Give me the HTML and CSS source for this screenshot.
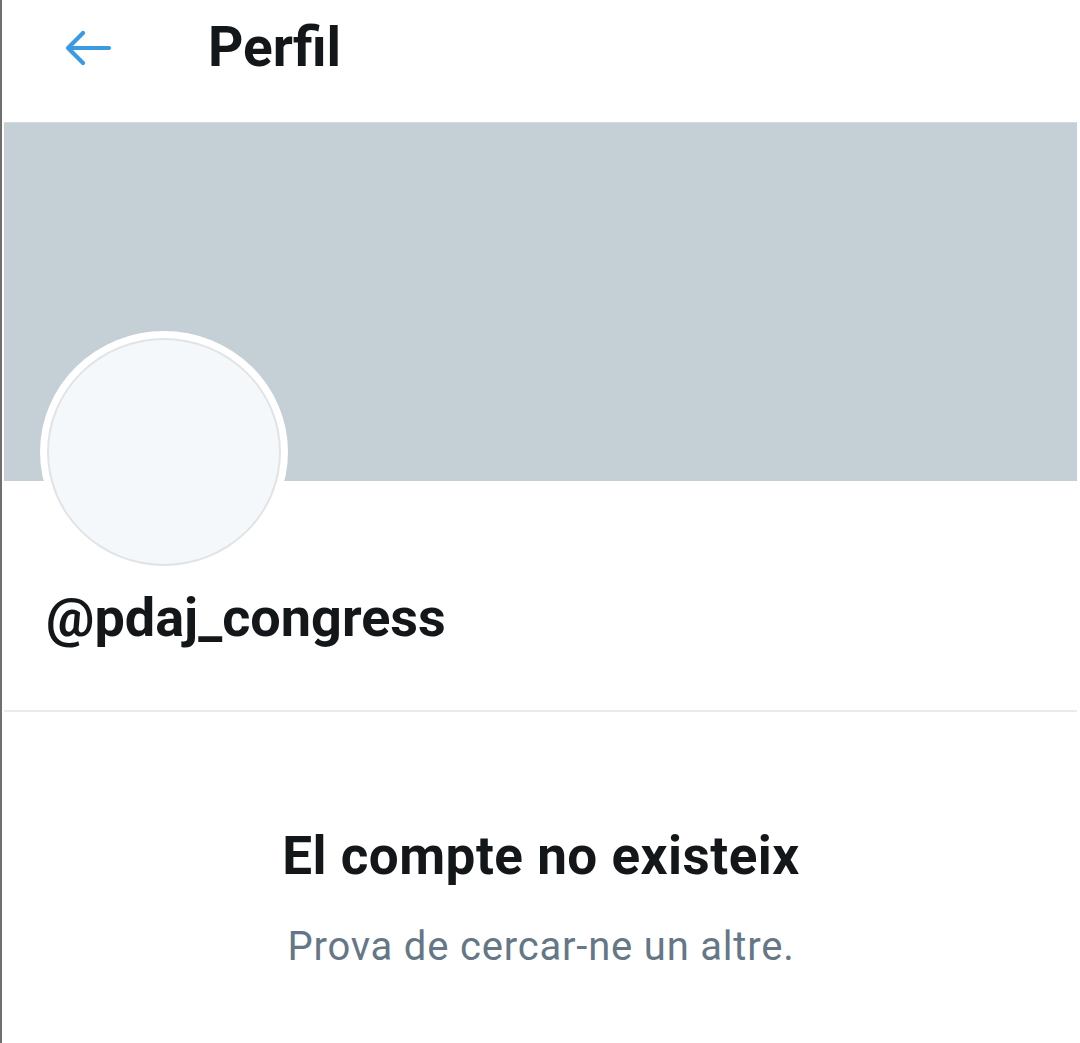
FILE: index.html
```html
<!DOCTYPE html>
<html lang="ca">
<head>
<meta charset="utf-8">
<title>Perfil</title>
<link rel="stylesheet" href="styles.css">
</head>
<body>
<div class="screen">
  <header class="topbar">
    <span class="back" aria-label="Enrere">
      <svg width="48" height="40" viewBox="0 0 48 40" fill="none" stroke="#3a9be0" stroke-width="4.2" stroke-linecap="round" stroke-linejoin="round">
        <path d="M45 18H4M19 3L4 18l15 15"/>
      </svg>
    </span>
    <h1 class="title">Perfil</h1>
  </header>
  <div class="banner"></div>
  <div class="avatar"><div class="avatar-inner"></div></div>
  <div class="handle">@pdaj_congress</div>
  <div class="divider"></div>
  <section class="empty">
    <h2 class="empty-title">El compte no existeix</h2>
    <p class="empty-sub">Prova de cercar-ne un altre.</p>
  </section>
</div>
</body>
</html>
```
FILE: styles.css
```css
* { box-sizing: border-box; }
html, body { margin: 0; padding: 0; background: #fff; }
body {
  font-family: Roboto, "Liberation Sans", Arial, sans-serif;
  color: #14171a;
}
.screen {
  width: 1080px;
  height: 1043px;
  border-left: 2px solid #6f6f6f;
  overflow: hidden;
}
.topbar {
  height: 122px;
  display: flex;
  align-items: flex-start;
  padding: 20px 0 0 62px;
}
.back {
  display: flex;
  width: 48px;
  height: 40px;
  margin-top: 10px;
}
.title {
  margin: 0 0 0 96px;
  font-size: 55px;
  font-weight: 700;
  line-height: 55px;
}
.banner {
  height: 359px;
  margin: 0 3px 0 2px;
  background: #c4cfd6;
  border-top: 1px solid #d2dade;
}
.avatar {
  width: 248px;
  height: 242px;
  margin: -150px 0 0 38px;
  border-radius: 50%;
  background: #fff;
  padding: 7px;
  position: relative;
}
.avatar-inner {
  width: 100%;
  height: 100%;
  border-radius: 50%;
  background: #f5f8fa;
  border: 2px solid #e1e4e6;
}
.handle {
  margin: 14px 0 0 44px;
  font-size: 54px;
  font-weight: 700;
  line-height: 62px;
}
.divider {
  height: 2px;
  background: #e6ecf0;
  margin: 61px 3px 0 2px;
}
.empty {
  display: flex;
  flex-direction: column;
  align-items: center;
  padding-top: 113px;
}
.empty-title {
  margin: 0;
  font-size: 53px;
  font-weight: 700;
  line-height: 62px;
  letter-spacing: 0.5px;
}
.empty-sub {
  margin: 36px 0 0;
  font-size: 40px;
  font-weight: 400;
  color: #657786;
  line-height: 48px;
  letter-spacing: 0.8px;
}
```
